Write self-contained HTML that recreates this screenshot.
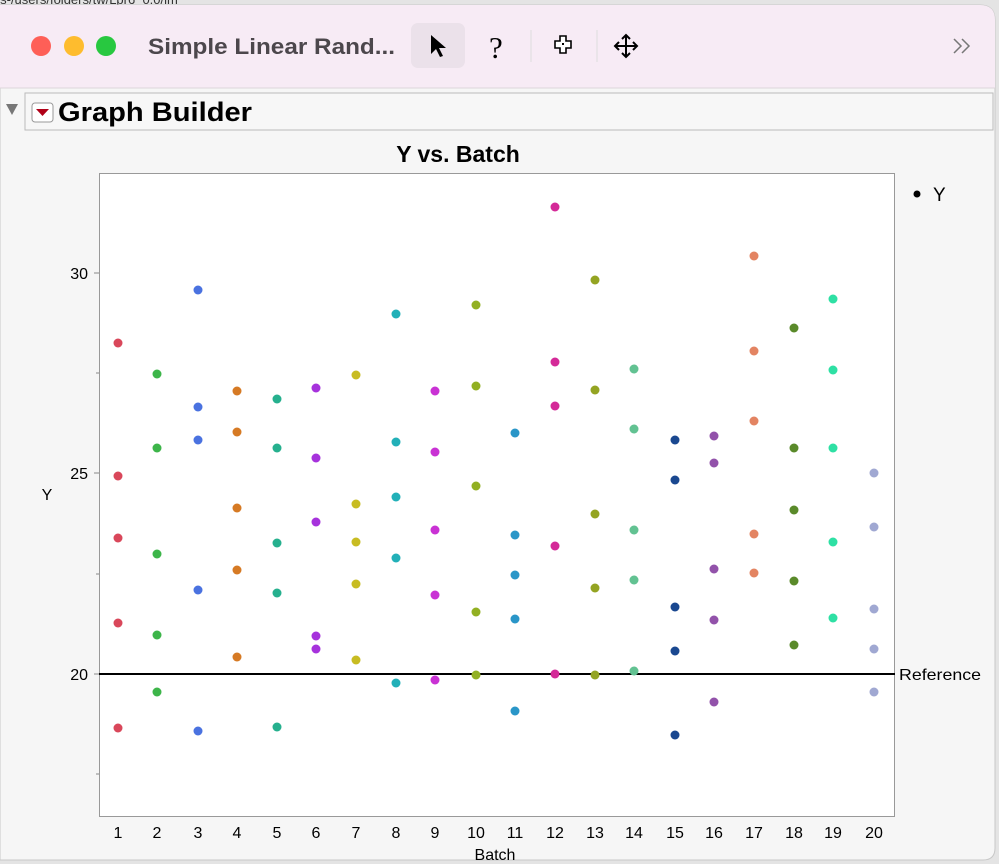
<!DOCTYPE html>
<html><head><meta charset="utf-8"><style>
html,body{margin:0;padding:0;width:999px;height:864px;overflow:hidden;background:#d8d8d8;font-family:"Liberation Sans",sans-serif;}
</style></head><body>
<svg width="999" height="864" xmlns="http://www.w3.org/2000/svg" font-family="Liberation Sans, sans-serif">
<rect x="0" y="0" width="999" height="864" fill="#e4e4e4"/>
<text x="-10" y="4" font-size="13" fill="#333">ols-/users/folders/tw/Lpr6_0.0/lm</text>
<path d="M0 5 H980 Q995 5 995 20 V848 Q995 860 983 860 H0 Z" fill="#f6f6f6" stroke="#c8c8c8"/>
<path d="M0 5 H980 Q995 5 995 20 V88 H0 Z" fill="#f7ebf5"/>
<line x1="0" y1="88" x2="995" y2="88" stroke="#dcd6da"/>
<circle cx="41" cy="46" r="10" fill="#fe5f57"/>
<circle cx="74" cy="46" r="10" fill="#febc2e"/>
<circle cx="106" cy="46" r="10" fill="#28c840"/>
<text x="148" y="54" font-size="22" font-weight="bold" fill="#4c474c" textLength="247" lengthAdjust="spacingAndGlyphs">Simple Linear Rand...</text>
<rect x="411" y="23" width="54" height="45" rx="7" fill="#ebe1ea"/>
<path d="M431 35 L431 54 L436 49 L440 57 L443 56 L439 48 L446 48 Z" fill="#000"/>
<text x="489" y="58" font-size="31" fill="#000" font-family="Liberation Serif, serif">?</text>
<line x1="531" y1="30" x2="531" y2="62" stroke="#ddd"/>
<line x1="597" y1="30" x2="597" y2="62" stroke="#ddd"/>
<path d="M560 36 h6 v5 h5 v7 h-5 v5 h-6 v-5 h-5 v-7 h5 z" fill="#fff" stroke="#000" stroke-width="1.6"/>
<rect x="562" y="43" width="2" height="2" fill="#000"/>
<path d="M626 35 V57 M615 46 H637 M622 39 L626 35 L630 39 M622 53 L626 57 L630 53 M619 42 L615 46 L619 50 M633 42 L637 46 L633 50" stroke="#000" stroke-width="2" fill="none"/>
<path d="M954 39 L961 46 L954 53 M962 39 L969 46 L962 53" stroke="#777" stroke-width="1.5" fill="none"/>
<path d="M6 104 L18 104 L12 115 Z" fill="#777"/>
<rect x="25" y="93" width="968" height="37" fill="#f7f7f7" stroke="#bbb"/>
<rect x="32" y="103" width="21" height="19" rx="3" fill="#fff" stroke="#999"/>
<path d="M36 109 L49 109 L42.5 116 Z" fill="#b00018"/>
<text x="58" y="121" font-size="27" font-weight="bold" fill="#000" textLength="194" lengthAdjust="spacingAndGlyphs">Graph Builder</text>
<text x="458" y="162" font-size="23" font-weight="bold" text-anchor="middle">Y vs. Batch</text>
<rect x="99.5" y="173.5" width="795" height="643" fill="#fff" stroke="#999"/>
<g stroke="#888"><line x1="94" y1="273" x2="99" y2="273"/><line x1="94" y1="473" x2="99" y2="473"/><line x1="94" y1="674" x2="99" y2="674"/><line x1="96" y1="373" x2="99" y2="373"/><line x1="96" y1="574" x2="99" y2="574"/><line x1="96" y1="774" x2="99" y2="774"/></g>
<g font-size="16" text-anchor="end"><text x="88" y="279">30</text><text x="88" y="479">25</text><text x="88" y="680">20</text></g>
<text x="47" y="500" font-size="16" text-anchor="middle">Y</text>
<line x1="99" y1="674" x2="895" y2="674" stroke="#000" stroke-width="2"/>
<text x="899" y="680" font-size="16" textLength="82" lengthAdjust="spacingAndGlyphs">Reference</text>
<circle cx="917" cy="194" r="3.5" fill="#000"/><text x="933" y="201" font-size="19">Y</text>
<g font-size="16" text-anchor="middle">
<text x="118" y="838">1</text><text x="157" y="838">2</text><text x="198" y="838">3</text><text x="237" y="838">4</text><text x="277" y="838">5</text><text x="316" y="838">6</text><text x="356" y="838">7</text><text x="396" y="838">8</text><text x="435" y="838">9</text><text x="476" y="838">10</text><text x="515" y="838">11</text><text x="555" y="838">12</text><text x="595" y="838">13</text><text x="634" y="838">14</text><text x="675" y="838">15</text><text x="714" y="838">16</text><text x="754" y="838">17</text><text x="794" y="838">18</text><text x="833" y="838">19</text><text x="874" y="838">20</text>
</g>
<text x="495" y="860" font-size="16" text-anchor="middle">Batch</text>
<g>
<g fill="#d9475a"><circle cx="118" cy="343" r="4.5"/><circle cx="118" cy="476" r="4.5"/><circle cx="118" cy="538" r="4.5"/><circle cx="118" cy="623" r="4.5"/><circle cx="118" cy="728" r="4.5"/></g>
<g fill="#3db54a"><circle cx="157" cy="374" r="4.5"/><circle cx="157" cy="448" r="4.5"/><circle cx="157" cy="554" r="4.5"/><circle cx="157" cy="635" r="4.5"/><circle cx="157" cy="692" r="4.5"/></g>
<g fill="#4a72e0"><circle cx="198" cy="290" r="4.5"/><circle cx="198" cy="407" r="4.5"/><circle cx="198" cy="440" r="4.5"/><circle cx="198" cy="590" r="4.5"/><circle cx="198" cy="731" r="4.5"/></g>
<g fill="#d67a24"><circle cx="237" cy="391" r="4.5"/><circle cx="237" cy="432" r="4.5"/><circle cx="237" cy="508" r="4.5"/><circle cx="237" cy="570" r="4.5"/><circle cx="237" cy="657" r="4.5"/></g>
<g fill="#26b08e"><circle cx="277" cy="399" r="4.5"/><circle cx="277" cy="448" r="4.5"/><circle cx="277" cy="543" r="4.5"/><circle cx="277" cy="593" r="4.5"/><circle cx="277" cy="727" r="4.5"/></g>
<g fill="#a632dc"><circle cx="316" cy="388" r="4.5"/><circle cx="316" cy="458" r="4.5"/><circle cx="316" cy="522" r="4.5"/><circle cx="316" cy="636" r="4.5"/><circle cx="316" cy="649" r="4.5"/></g>
<g fill="#c8bc22"><circle cx="356" cy="375" r="4.5"/><circle cx="356" cy="504" r="4.5"/><circle cx="356" cy="542" r="4.5"/><circle cx="356" cy="584" r="4.5"/><circle cx="356" cy="660" r="4.5"/></g>
<g fill="#22b0b8"><circle cx="396" cy="314" r="4.5"/><circle cx="396" cy="442" r="4.5"/><circle cx="396" cy="497" r="4.5"/><circle cx="396" cy="558" r="4.5"/><circle cx="396" cy="683" r="4.5"/></g>
<g fill="#c932d4"><circle cx="435" cy="391" r="4.5"/><circle cx="435" cy="452" r="4.5"/><circle cx="435" cy="530" r="4.5"/><circle cx="435" cy="595" r="4.5"/><circle cx="435" cy="680" r="4.5"/></g>
<g fill="#92b022"><circle cx="476" cy="305" r="4.5"/><circle cx="476" cy="386" r="4.5"/><circle cx="476" cy="486" r="4.5"/><circle cx="476" cy="612" r="4.5"/><circle cx="476" cy="675" r="4.5"/></g>
<g fill="#2a96c8"><circle cx="515" cy="433" r="4.5"/><circle cx="515" cy="535" r="4.5"/><circle cx="515" cy="575" r="4.5"/><circle cx="515" cy="619" r="4.5"/><circle cx="515" cy="711" r="4.5"/></g>
<g fill="#d42a98"><circle cx="555" cy="207" r="4.5"/><circle cx="555" cy="362" r="4.5"/><circle cx="555" cy="406" r="4.5"/><circle cx="555" cy="546" r="4.5"/><circle cx="555" cy="674" r="4.5"/></g>
<g fill="#94a422"><circle cx="595" cy="280" r="4.5"/><circle cx="595" cy="390" r="4.5"/><circle cx="595" cy="514" r="4.5"/><circle cx="595" cy="588" r="4.5"/><circle cx="595" cy="675" r="4.5"/></g>
<g fill="#62c292"><circle cx="634" cy="369" r="4.5"/><circle cx="634" cy="429" r="4.5"/><circle cx="634" cy="530" r="4.5"/><circle cx="634" cy="580" r="4.5"/><circle cx="634" cy="671" r="4.5"/></g>
<g fill="#1a4890"><circle cx="675" cy="440" r="4.5"/><circle cx="675" cy="480" r="4.5"/><circle cx="675" cy="607" r="4.5"/><circle cx="675" cy="651" r="4.5"/><circle cx="675" cy="735" r="4.5"/></g>
<g fill="#9252aa"><circle cx="714" cy="436" r="4.5"/><circle cx="714" cy="463" r="4.5"/><circle cx="714" cy="569" r="4.5"/><circle cx="714" cy="620" r="4.5"/><circle cx="714" cy="702" r="4.5"/></g>
<g fill="#e38462"><circle cx="754" cy="256" r="4.5"/><circle cx="754" cy="351" r="4.5"/><circle cx="754" cy="421" r="4.5"/><circle cx="754" cy="534" r="4.5"/><circle cx="754" cy="573" r="4.5"/></g>
<g fill="#5a8a2a"><circle cx="794" cy="328" r="4.5"/><circle cx="794" cy="448" r="4.5"/><circle cx="794" cy="510" r="4.5"/><circle cx="794" cy="581" r="4.5"/><circle cx="794" cy="645" r="4.5"/></g>
<g fill="#2ee0a4"><circle cx="833" cy="299" r="4.5"/><circle cx="833" cy="370" r="4.5"/><circle cx="833" cy="448" r="4.5"/><circle cx="833" cy="542" r="4.5"/><circle cx="833" cy="618" r="4.5"/></g>
<g fill="#a0a8d2"><circle cx="874" cy="473" r="4.5"/><circle cx="874" cy="527" r="4.5"/><circle cx="874" cy="609" r="4.5"/><circle cx="874" cy="649" r="4.5"/><circle cx="874" cy="692" r="4.5"/></g>
</g>
</svg>
</body></html>
